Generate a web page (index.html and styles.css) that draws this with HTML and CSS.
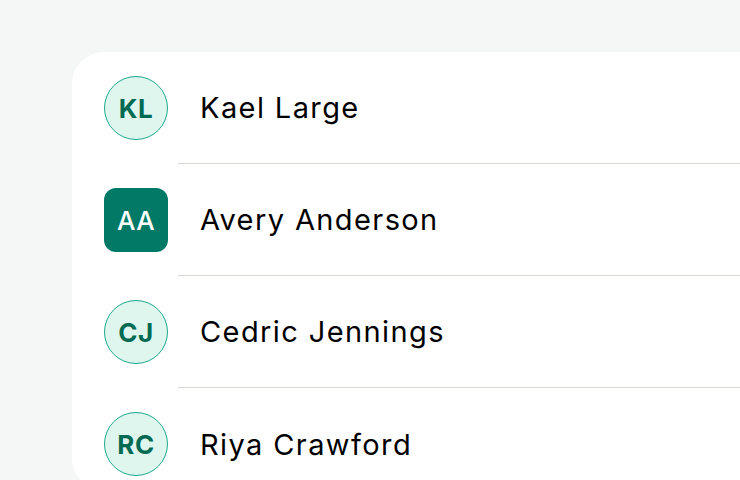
FILE: index.html
```html
<!DOCTYPE html>
<html>
<head>
<meta charset="utf-8">
<link rel="stylesheet" href="styles.css">
</head>
<body>
<div class="card">
  <div class="row">
    <div class="avatar circle">KL</div>
    <div class="name">Kael Large</div>
  </div>
  <div class="row">
    <div class="avatar square">AA</div>
    <div class="name">Avery Anderson</div>
  </div>
  <div class="row">
    <div class="avatar circle">CJ</div>
    <div class="name">Cedric Jennings</div>
  </div>
  <div class="row">
    <div class="avatar circle">RC</div>
    <div class="name">Riya Crawford</div>
  </div>
</div>
</body>
</html>
```
FILE: styles.css
```css
html, body {
  margin: 0;
  padding: 0;
  background: #f5f7f6;
  overflow: hidden;
  width: 740px;
  height: 480px;
}
body {
  font-family: Inter, "Noto Sans", sans-serif;
  padding: 52px 0 0 72px;
  box-sizing: border-box;
}
.card {
  background: #ffffff;
  border-radius: 32px 0 0 32px;
  width: 668px;
  height: 438px;
  overflow: hidden;
  padding-left: 32px;
  box-sizing: border-box;
}
.row {
  display: flex;
  align-items: stretch;
  height: 112px;
}
.avatar {
  width: 64px;
  height: 64px;
  align-self: center;
  box-sizing: border-box;
  display: flex;
  align-items: center;
  justify-content: center;
  font-size: 26px;
  font-weight: 700;
  letter-spacing: 0.5px;
  margin-right: 10px;
  flex-shrink: 0;
}
.circle {
  border-radius: 50%;
  background: #dff6ef;
  border: 1px solid #1ea88c;
  color: #006a52;
}
.square {
  border-radius: 12px;
  background: #007a66;
  color: #ffffff;
  font-weight: 500;
}
.name {
  flex: 1;
  display: flex;
  align-items: center;
  padding-left: 22px;
  font-size: 29px;
  letter-spacing: 1.4px;
  color: #000000;
  border-bottom: 1px solid #d8d6d0;
}
.row:last-child .name {
  border-bottom: none;
}
```
